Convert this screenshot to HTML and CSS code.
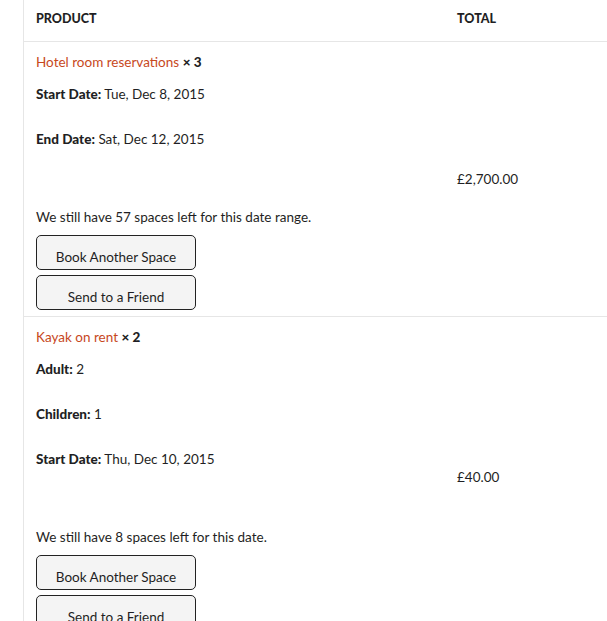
FILE: index.html
```html
<!DOCTYPE html>
<html lang="en">
<head>
<meta charset="utf-8">
<title>Order</title>
<link rel="stylesheet" href="styles.css">
</head>
<body>
<div class="page">
  <table class="order">
    <thead>
      <tr>
        <th class="col-product">Product</th>
        <th class="col-total">Total</th>
      </tr>
    </thead>
    <tbody>
      <tr>
        <td class="col-product">
          <div class="name"><a href="#">Hotel room reservations</a> <strong class="qty">× 3</strong></div>
          <div class="meta first"><strong>Start Date:</strong> Tue, Dec 8, 2015</div>
          <div class="meta"><strong>End Date:</strong> Sat, Dec 12, 2015</div>
          <p class="note">We still have 57 spaces left for this date range.</p>
          <div class="actions">
            <button class="btn" type="button">Book Another Space</button>
            <button class="btn" type="button">Send to a Friend</button>
          </div>
        </td>
        <td class="col-total">£2,700.00</td>
      </tr>
      <tr class="last">
        <td class="col-product">
          <div class="name"><a href="#">Kayak on rent</a> <strong class="qty">× 2</strong></div>
          <div class="meta first"><strong>Adult:</strong> 2</div>
          <div class="meta"><strong>Children:</strong> 1</div>
          <div class="meta"><strong>Start Date:</strong> Thu, Dec 10, 2015</div>
          <p class="note">We still have 8 spaces left for this date.</p>
          <div class="actions">
            <button class="btn" type="button">Book Another Space</button>
            <button class="btn" type="button">Send to a Friend</button>
          </div>
        </td>
        <td class="col-total">£40.00</td>
      </tr>
    </tbody>
  </table>
</div>
</body>
</html>
```
FILE: styles.css
```css
html, body {
  margin: 0;
  padding: 0;
  background: #ffffff;
}
body {
  font-family: Lato, "Liberation Sans", sans-serif;
  font-size: 13.5px;
  line-height: 20px;
  color: #1f1f24;
  overflow: hidden;
}
.page {
  padding-left: 23px;
}
.order {
  width: 100%;
  border-collapse: collapse;
  border-left: 1px solid #e6e6e6;
}
.order th {
  text-align: left;
  font-weight: 900;
  font-size: 12.5px;
  text-transform: uppercase;
  padding: 9px 12px 12px;
  border-bottom: 1px solid #e6e6e6;
}
.order td {
  border-top: 1px solid #e6e6e6;
  padding: 10px 12px 6px;
  vertical-align: top;
}
.order th.col-product,
.order td.col-product {
  width: 397px;
}
.order td.col-total {
  vertical-align: middle;
  padding-top: 0;
  padding-bottom: 0;
}
.order tr.last td.col-product {
  padding-bottom: 7px;
}
.name a {
  color: #c7481c;
  text-decoration: none;
}
.qty {
  font-weight: 900;
}
.meta {
  margin-top: 25px;
}
.meta.first {
  margin-top: 12px;
}
.meta strong {
  font-weight: 900;
}
.note {
  margin: 58px 0 0;
}
.actions {
  display: flex;
  flex-direction: column;
  align-items: flex-start;
  gap: 5px;
  margin-top: 8px;
}
.btn {
  width: 160px;
  height: 35px;
  box-sizing: border-box;
  padding: 11px 0 2px;
  font-family: inherit;
  font-size: 13.5px;
  line-height: 20px;
  color: #1f1f24;
  background: #f4f4f4;
  border: 1px solid #222222;
  border-radius: 5px;
  text-align: center;
}
```
